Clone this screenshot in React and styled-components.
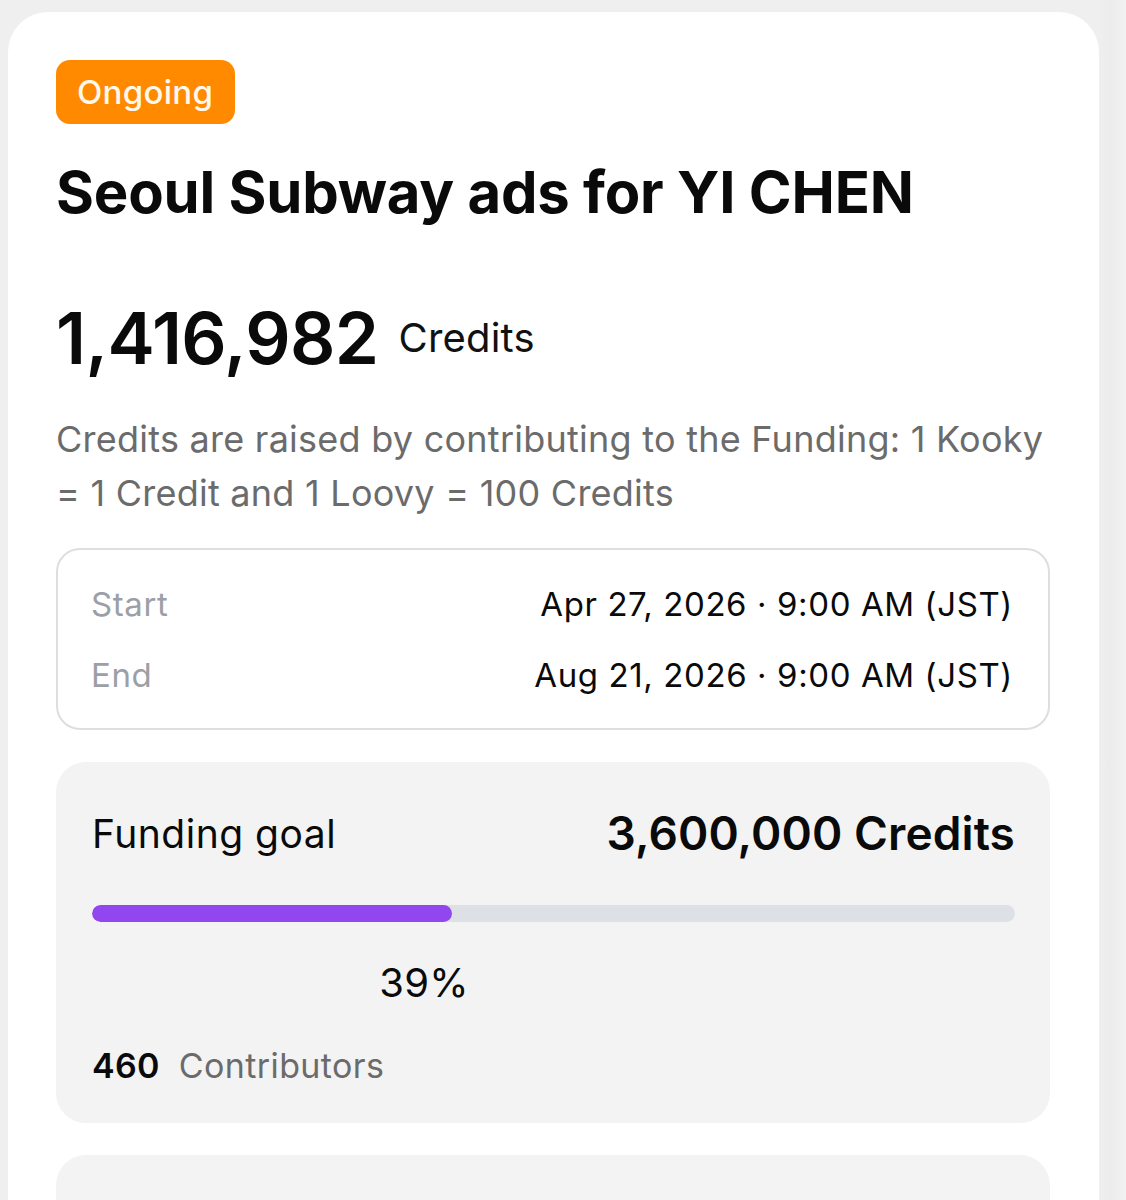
import React from "react";
import styled, { createGlobalStyle } from "styled-components";

const Global = createGlobalStyle`
  html, body { margin: 0; padding: 0; background: #efefef; }
  body { font-family: Inter, "Noto Sans", sans-serif; -webkit-font-smoothing: antialiased; }
  * { box-sizing: border-box; }
`;

const Page = styled.div`
  height: 1200px;
  overflow: hidden;
  padding: 12px 27px 0 8px;
  background: linear-gradient(to right, #efefef 0, #efefef 1100px, #ececec 1110px, #f2f2f2 1126px);
`;

const Card = styled.div`
  background: #fff;
  border-radius: 40px;
  padding: 48px 49px 40px 48px;
  display: flex;
  flex-direction: column;
  min-height: 1300px;
`;

const Badge = styled.span`
  align-self: flex-start;
  background: #ff8a00;
  color: #fff8ec;
  border-radius: 14px;
  height: 64px;
  padding: 0 22px 0 21px;
  display: flex;
  align-items: center;
  font-size: 33px;
  font-weight: 500;
  letter-spacing: 0.3px;
`;

const Title = styled.h1`
  margin: 26px 0 0;
  font-size: 58px;
  font-weight: 650;
  color: #0a0a0a;
  line-height: 84px;
  letter-spacing: -0.2px;
`;

const AmountRow = styled.div`
  display: flex;
  align-items: center;
  gap: 20px;
  margin-top: 64px;
  height: 80px;
`;

const Amount = styled.span`
  font-size: 71px;
  font-weight: 600;
  color: #0a0a0a;
  letter-spacing: -0.6px;
  line-height: 80px;
`;

const Unit = styled.span`
  font-size: 40px;
  font-weight: 400;
  color: #111;
  line-height: 80px;
  letter-spacing: 0.2px;
`;

const Description = styled.p`
  margin: 34px 0 0;
  font-size: 36px;
  line-height: 54px;
  color: #6b6b6b;
  letter-spacing: 0.25px;
`;

const DateBox = styled.div`
  margin-top: 28px;
  border: 2px solid #dedede;
  border-radius: 24px;
  padding: 34px 35px 33px 33px;
  display: flex;
  flex-direction: column;
  gap: 31px;
`;

const DateRow = styled.div`
  display: flex;
  justify-content: space-between;
  align-items: center;
  font-size: 33px;
  line-height: 40px;
  letter-spacing: 0.6px;
`;

const DateLabel = styled.span`
  color: #9ca0a6;
`;

const DateValue = styled.span`
  color: #0a0a0a;
`;

const GrayCard = styled.div`
  margin-top: 32px;
  background: #f3f3f3;
  border-radius: 30px;
  padding: ${(p) => p.$pad || "43px 35px 36px 36px"};
`;

const GoalRow = styled.div`
  display: flex;
  justify-content: space-between;
  align-items: center;
  height: 56px;
`;

const GoalLabel = styled.span`
  font-size: 39px;
  color: #0a0a0a;
  letter-spacing: 0.5px;
`;

const GoalValue = styled.span`
  font-size: 46px;
  font-weight: 600;
  color: #0a0a0a;
  letter-spacing: 0.1px;
`;

const Track = styled.div`
  margin-top: 44px;
  height: 17px;
  border-radius: 9px;
  background: #dde1e6;
  overflow: hidden;
`;

const Fill = styled.div`
  height: 100%;
  border-radius: 9px;
  background: #9146ef;
`;

const PercentLine = styled.div`
  position: relative;
  height: 52px;
  margin-top: 35px;
`;

const Percent = styled.span`
  position: absolute;
  top: 0;
  transform: translateX(-50%);
  font-size: 40px;
  line-height: 52px;
  color: #0a0a0a;
  letter-spacing: 0.2px;
`;

const ContribRow = styled.div`
  display: flex;
  align-items: center;
  gap: 19px;
  margin-top: 34px;
  height: 44px;
`;

const ContribCount = styled.span`
  font-size: 34px;
  font-weight: 600;
  color: #0a0a0a;
  letter-spacing: 0.3px;
`;

const ContribLabel = styled.span`
  font-size: 34px;
  color: #6b6b6b;
  letter-spacing: 0.4px;
`;

const NextRow = styled.div`
  display: flex;
  justify-content: space-between;
  align-items: center;
  font-size: 34px;
  color: #0a0a0a;
`;

export default function App() {
  const pct = 39;
  return (
    <>
      <Global />
      <Page>
        <Card>
          <Badge>Ongoing</Badge>
          <Title>Seoul Subway ads for YI CHEN</Title>
          <AmountRow>
            <Amount>1,416,982</Amount>
            <Unit>Credits</Unit>
          </AmountRow>
          <Description>
            Credits are raised by contributing to the Funding: 1 Kooky = 1 Credit and 1 Loovy = 100 Credits
          </Description>
          <DateBox>
            <DateRow>
              <DateLabel>Start</DateLabel>
              <DateValue>Apr 27, 2026 · 9:00 AM (JST)</DateValue>
            </DateRow>
            <DateRow>
              <DateLabel>End</DateLabel>
              <DateValue>Aug 21, 2026 · 9:00 AM (JST)</DateValue>
            </DateRow>
          </DateBox>
          <GrayCard>
            <GoalRow>
              <GoalLabel>Funding goal</GoalLabel>
              <GoalValue>3,600,000 Credits</GoalValue>
            </GoalRow>
            <Track>
              <Fill style={{ width: `${pct}%` }} />
            </Track>
            <PercentLine>
              <Percent style={{ left: `calc(${pct}% - 28px)` }}>{pct}%</Percent>
            </PercentLine>
            <ContribRow>
              <ContribCount>460</ContribCount>
              <ContribLabel>Contributors</ContribLabel>
            </ContribRow>
          </GrayCard>
          <GrayCard $pad="44px 35px 34px 36px">
            <NextRow>
              <GoalLabel>Funding period</GoalLabel>
              <span>116 days left</span>
            </NextRow>
          </GrayCard>
        </Card>
      </Page>
    </>
  );
}
